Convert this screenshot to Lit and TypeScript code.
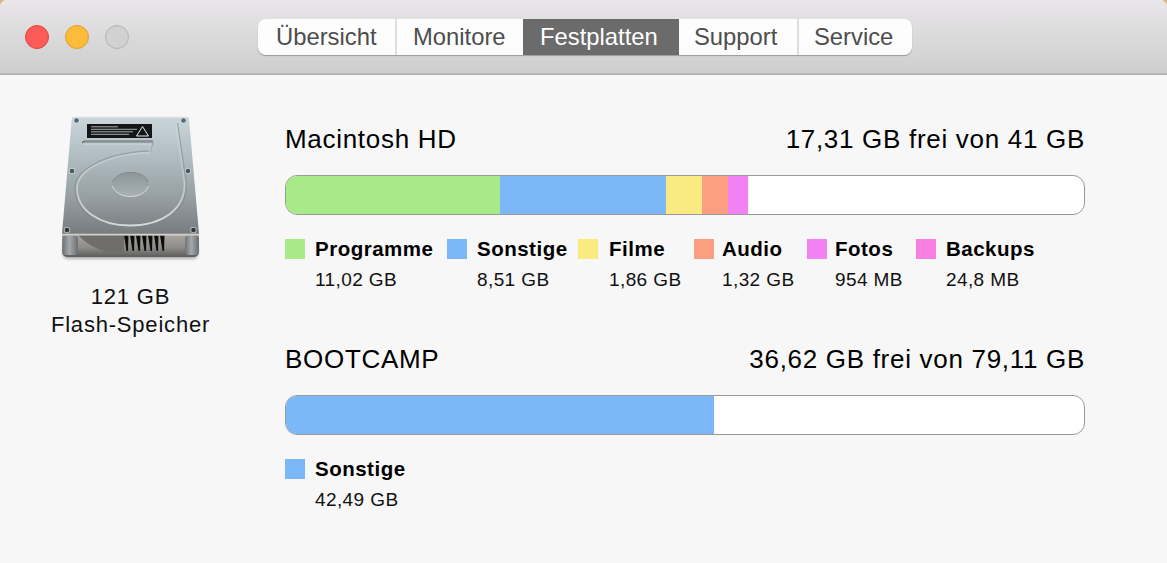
import { LitElement, html, css, svg } from "lit";
import { customElement } from "lit/decorators.js";

const volumes = [
  {
    name: "Macintosh HD", free: "17,31 GB frei von 41 GB",
    segs: [["#a8ea88", 214], ["#7cb8f8", 166], ["#fbe981", 36], ["#fb9f80", 26], ["#f281f4", 20]],
    items: [["#a8ea88", "Programme", "11,02 GB"], ["#7cb8f8", "Sonstige", "8,51 GB"], ["#fbe981", "Filme", "1,86 GB"], ["#fb9f80", "Audio", "1,32 GB"], ["#f281f4", "Fotos", "954 MB"], ["#f880e0", "Backups", "24,8 MB"]],
  },
  {
    name: "BOOTCAMP", free: "36,62 GB frei von 79,11 GB",
    segs: [["#7cb8f8", 428]],
    items: [["#7cb8f8", "Sonstige", "42,49 GB"]],
  },
];
const tabs = ["Übersicht", "Monitore", "Festplatten", "Support", "Service"];

const screws = [[36.5, 20.5], [143.5, 20.5], [32, 71], [148, 71], [27, 130], [153.5, 130]];
const vents = [84, 90, 96, 102, 108, 114, 120];

const disk = svg`
<svg class="disk" viewBox="0 0 180 170" width="180" height="170" aria-hidden="true">
  <defs>
    <linearGradient id="top" x1="0" y1="0" x2="0" y2="1">
      <stop offset="0" stop-color="#cad6da"/><stop offset="0.35" stop-color="#afbcc1"/><stop offset="0.7" stop-color="#969ea2"/><stop offset="1" stop-color="#777c7f"/>
    </linearGradient>
    <linearGradient id="hub" x1="0" y1="0" x2="0" y2="1">
      <stop offset="0" stop-color="#8c9599"/><stop offset="1" stop-color="#aab2b5"/>
    </linearGradient>
    <linearGradient id="base" x1="0" y1="0" x2="0" y2="1">
      <stop offset="0" stop-color="#aeaaa5"/><stop offset=".6" stop-color="#8e8c89"/><stop offset="1" stop-color="#5c5c5c"/>
    </linearGradient>
    <linearGradient id="post" x1="0" y1="0" x2="1" y2="0">
      <stop offset="0" stop-color="#6f7376"/><stop offset="0.45" stop-color="#a3a9ad"/><stop offset="1" stop-color="#6a6e70"/>
    </linearGradient>
    <linearGradient id="rimLight" x1="0" y1="0" x2="0" y2="1">
      <stop offset="0" stop-color="#dde5e8" stop-opacity=".25"/><stop offset=".5" stop-color="#c9d0d3" stop-opacity=".7"/><stop offset="1" stop-color="#d8d8d8"/>
    </linearGradient>
    <filter id="soft"><feGaussianBlur stdDeviation=".5"/></filter>
    <filter id="blur" x="-10%" y="-20%" width="120%" height="140%"><feGaussianBlur stdDeviation="1.800"/></filter>
  </defs>
  <rect x="23" y="142" width="135" height="17" rx="5" fill="#000" opacity=".3" filter="url(#blur)"/>
  <g filter="url(#soft)">
    <path d="M22 133H159V151Q159 157 153 157H28Q22 157 22 151Z" fill="url(#base)"/>
    <path d="M38 135H84V153H70Q50 148 38 135Z" fill="#6f6e6c"/>
    <rect x="22.500" y="135" width="15.500" height="20" rx="4" fill="url(#post)"/>
    <rect x="145" y="135" width="14" height="20" rx="4" fill="url(#post)"/>
    ${vents.map((x) => svg`<path d="M${x} 135.500h4.500l-.5 15.500h-1.500z" fill="#0d0e0f"/>`)}
    <path d="M33.500 17Q32 17 31.800 19L22 133.500H159L149 19Q148.800 17 147.300 17Z" fill="url(#top)"/>
    <path d="M22 134H159V135.400H22Z" fill="#d5cfca"/>
    <path d="M33.500 17H147.300" stroke="#e4ebed" stroke-width="1" fill="none"/>
    <path d="M42 42.500H113L110 51C64 53 35 70 35 88C35 112 58 127.500 90 127.500C123 127.500 148 112 146 82L137.500 23" fill="none" stroke="#7f898d" stroke-width="1.400" opacity=".6"/>
    <path d="M43 44H111.500L109 52.500C65 54.500 37 71 37 88C37 110 59 125.500 90 125.500C121 125.500 146 110 144.500 82L136 23" fill="none" stroke="url(#rimLight)" stroke-width="1.800"/>
    <path d="M42 42.500L44.500 41H113" stroke="#5e676b" stroke-width="1.200" fill="none"/>
    <ellipse cx="90.500" cy="84.500" rx="18.500" ry="12.500" fill="url(#hub)"/>
    <path d="M72.500 86C74 92 82 96.500 90.500 96.500S107 92 108.500 86" fill="none" stroke="#d3d8da" stroke-width="1"/>
    <path d="M73 82C75 76 82 72.500 90.500 72.500S106 76 108 82" fill="none" stroke="#7b8488" stroke-width=".8"/>
    ${screws.map(([x, y], i) => svg`<circle cx="${x}" cy="${y}" r="3.200" fill="#e0e5e7" opacity=".55"/><circle cx="${x}" cy="${y}" r="2.300" fill="${i < 2 ? "#4f6a74" : i < 4 ? "#48585f" : "#34393c"}"/>`)}
  </g>
  <rect x="47" y="24" width="65" height="14" fill="#14171a"/>
  <path d="M51 26.800h27M51 29.300h46M51 31.800h42M51 34.300h38" stroke="#cfcfcf" stroke-width=".8" fill="none"/>
  <path d="M102.500 26.500L108.500 36H96.500Z" fill="#14171a" stroke="#eee" stroke-width="1"/>
</svg>`;

@customElement("app-root")
export class AppRoot extends LitElement {
  static styles = css`
    :host { display: block; width: 1167px; height: 563px; background: #d9b486; font-family: "Liberation Sans", Arial, sans-serif; overflow: hidden; }
    .window { height: 563px; background: #f7f7f7; border-radius: 7px 7px 0 0; overflow: hidden; display: flex; flex-direction: column; }
    .bar { box-sizing: border-box; height: 75px; flex: none; padding: 19px 0 0 25px; display: flex; align-items: flex-start; background: linear-gradient(#e8e6e8, #cfcecf); border-bottom: 2px solid #b4b3b4; }
    .lights { display: flex; gap: 16px; margin-top: 6px; width: 233px; flex: none; }
    .light { box-sizing: border-box; width: 24px; height: 24px; border-radius: 50%; border: 1px solid; }
    .close { background: #fc5b57; border-color: #e2443f; }
    .min { background: #fdbb3c; border-color: #e0a02e; }
    .zoom { background: #d2d1d1; border-color: #b5b4b4; }
    .tabs { display: flex; height: 36px; width: 654px; background: #fdfdfd; border-radius: 8px; box-shadow: 0 1px 1px rgba(0,0,0,.28); color: #4d4d4d; font-size: 23.800px; line-height: 36px; }
    .tab { box-sizing: border-box; flex: none; white-space: nowrap; }
    .tab:nth-child(1) { width: 137px; padding-left: 18px; }
    .tab:nth-child(2) { width: 128px; padding-left: 16px; border-left: 2px solid #dedede; }
    .tab:nth-child(3) { width: 156px; padding-left: 17px; background: #6b6b6b; color: #fff; }
    .tab:nth-child(4) { width: 118px; padding-left: 15px; }
    .tab:nth-child(5) { width: 115px; padding-left: 15px; border-left: 2px solid #dedede; }
    .body { display: flex; flex: 1; }
    .side { width: 260px; flex: none; box-sizing: border-box; padding: 25px 0 0 40px; color: #111; }
    .disk { display: block; }
    .cap { width: 181px; margin-top: 13px; text-align: center; font-size: 22px; letter-spacing: .8px; line-height: 28px; }
    .main { width: 800px; margin-left: 25px; padding-top: 47px; }
    .vol { height: 220px; }
    .head { display: flex; justify-content: space-between; color: #000; font-size: 26px; letter-spacing: .7px; line-height: 34px; }
    .meter { box-sizing: border-box; display: flex; height: 40px; margin-top: 19px; background: #fff; border: 1px solid #999; border-radius: 12px; overflow: hidden; }
    .seg { height: 100%; flex: none; }
    .legend { display: grid; grid-template-columns: 162px 131px 116px 113px 109px auto; margin-top: 24px; }
    .item { display: grid; grid-template-columns: 20px auto; column-gap: 10px; justify-content: start; }
    .item:nth-child(3) { column-gap: 11px; }
    .item:nth-child(4), .item:nth-child(5) { column-gap: 8px; }
    .sw { width: 20px; height: 20px; }
    .lab { font-weight: 700; font-size: 20.500px; letter-spacing: .5px; line-height: 20px; color: #000; }
    .val { grid-column: 2; font-size: 19px; letter-spacing: .4px; line-height: 22px; margin-top: 10px; color: #111; }
  `;
  render() {
    return html`<div class="window">
      <div class="bar">
        <div class="lights"><span class="light close"></span><span class="light min"></span><span class="light zoom"></span></div>
        <div class="tabs">${tabs.map((t) => html`<div class="tab">${t}</div>`)}</div>
      </div>
      <div class="body">
        <div class="side">${disk}<div class="cap">121 GB<br />Flash-Speicher</div></div>
        <div class="main">
          ${volumes.map((v) => html`<section class="vol">
            <div class="head"><span>${v.name}</span><span>${v.free}</span></div>
            <div class="meter">${v.segs.map(([c, w]) => html`<div class="seg" style="width:${w}px;background:${c}"></div>`)}</div>
            <div class="legend">${v.items.map(([c, l, s]) => html`<div class="item"><span class="sw" style="background:${c}"></span><span class="lab">${l}</span><span class="val">${s}</span></div>`)}</div>
          </section>`)}
        </div>
      </div>
    </div>`;
  }
}
